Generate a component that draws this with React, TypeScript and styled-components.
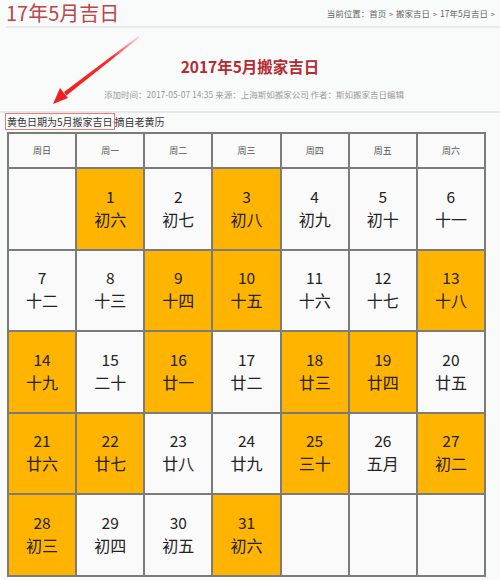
import React from "react";
import styled, { createGlobalStyle } from "styled-components";

const Global = createGlobalStyle`
  html, body { margin: 0; padding: 0; background: #f9fafa; }
  body { font-family: "Microsoft YaHei", "Noto Sans CJK SC", "Noto Sans", sans-serif; }
`;

const Page = styled.div`
  position: relative;
  width: 500px;
  height: 580px;
  overflow: hidden;
  background: #f9fafa;
`;

const TopBar = styled.div`
  display: flex;
  align-items: center;
  justify-content: space-between;
  height: 26px;
  margin-left: 6px;
  padding-right: 2px;
  border-bottom: 2px solid #e9eaea;
`;

const PageTitle = styled.h1`
  margin: 0;
  font-size: 20px;
  line-height: 26px;
  font-weight: 400;
  color: #bd4449;
  white-space: nowrap;
`;

const Crumbs = styled.div`
  font-size: 8.5px;
  line-height: 12px;
  color: #666;
  white-space: nowrap;
`;

const Sep = styled.span`
  margin: 0 3px;
  font-size: 7px;
`;

const Article = styled.div`
  display: flex;
  flex-direction: column;
  align-items: center;
  padding-top: 28px;
`;

const Heading = styled.h2`
  margin: 0;
  font-size: 15.5px;
  line-height: 20px;
  font-weight: 700;
  color: #b52a2f;
`;

const Meta = styled.div`
  margin-top: 12px;
  padding-left: 8px;
  font-size: 8.5px;
  line-height: 12px;
  color: #9a9a9a;
  white-space: nowrap;
`;

const Divider = styled.div`
  margin-top: 11px;
  height: 2px;
  background: #e6e7e7;
`;

const Note = styled.div`
  margin: 2px 0 0 5px;
  font-size: 10px;
  line-height: 14px;
  color: #333;
  white-space: nowrap;
`;

const Boxed = styled.span`
  border: 1px solid #ec7b7b;
  padding: 0 1px;
`;

const Grid = styled.div`
  margin: 3px 0 0 7px;
  width: 479px;
  display: grid;
  grid-template-columns: repeat(7, 1fr);
  grid-template-rows: 33px repeat(5, 79.5px);
  gap: 2px;
  padding: 2px;
  box-sizing: border-box;
  background: #7b7b7b;
`;

const HeadCell = styled.div`
  background: #fafafa;
  display: flex;
  align-items: center;
  justify-content: center;
  font-size: 9px;
  color: #555;
`;

const DayCell = styled.div<{ $lucky: boolean }>`
  background: ${(p) => (p.$lucky ? "#ffb400" : "#fafafa")};
  display: flex;
  flex-direction: column;
  align-items: center;
  justify-content: center;
  color: #222;
  padding-bottom: 2px;
`;

const DayNum = styled.div`
  font-size: 15.5px;
  line-height: 22px;
`;

const Lunar = styled.div`
  font-size: 16px;
  line-height: 24px;
`;

const Arrow = styled.svg`
  position: absolute;
  left: 0;
  top: 0;
  pointer-events: none;
`;

const weekdays = ["周日", "周一", "周二", "周三", "周四", "周五", "周六"];

const lunar = [
  "初六", "初七", "初八", "初九", "初十", "十一", "十二", "十三", "十四", "十五",
  "十六", "十七", "十八", "十九", "二十", "廿一", "廿二", "廿三", "廿四", "廿五",
  "廿六", "廿七", "廿八", "廿九", "三十", "五月", "初二", "初三", "初四", "初五", "初六",
];

const lucky = new Set([1, 3, 9, 10, 13, 14, 16, 18, 19, 21, 22, 25, 27, 28, 31]);

export default function App() {
  const cells: (number | null)[] = [null];
  for (let d = 1; d <= 31; d++) cells.push(d);
  while (cells.length < 35) cells.push(null);

  return (
    <Page>
      <Global />
      <TopBar>
        <PageTitle>17年5月吉日</PageTitle>
        <Crumbs>
          当前位置：首页<Sep>&gt;</Sep>搬家吉日<Sep>&gt;</Sep>17年5月吉日<Sep>&gt;</Sep>
        </Crumbs>
      </TopBar>
      <Article>
        <Heading>2017年5月搬家吉日</Heading>
        <Meta>添加时间：2017-05-07 14:35 来源：上海斯如搬家公司 作者：斯如搬家吉日编辑</Meta>
      </Article>
      <Divider />
      <Note>
        <Boxed>黄色日期为5月搬家吉日</Boxed>摘自老黄历
      </Note>
      <Grid>
        {weekdays.map((w) => (
          <HeadCell key={w}>{w}</HeadCell>
        ))}
        {cells.map((d, i) => (
          <DayCell key={i} $lucky={d !== null && lucky.has(d)}>
            {d !== null && (
              <>
                <DayNum>{d}</DayNum>
                <Lunar>{lunar[d - 1]}</Lunar>
              </>
            )}
          </DayCell>
        ))}
      </Grid>
      <Arrow width="500" height="580" viewBox="0 0 500 580">
        <defs>
          <linearGradient id="ag" x1="140" y1="37" x2="60" y2="98" gradientUnits="userSpaceOnUse">
            <stop offset="0" stopColor="#ff3030" stopOpacity="0.15" />
            <stop offset="0.35" stopColor="#ff2a2a" />
            <stop offset="1" stopColor="#f01e1e" />
          </linearGradient>
        </defs>
        <path d="M140 37 L138.5 36 L64 92 L66.5 95.5 Z" fill="url(#ag)" />
        <path d="M53 104 L60 88 L64 93 L68 98 Z" fill="#f01e1e" />
      </Arrow>
    </Page>
  );
}
